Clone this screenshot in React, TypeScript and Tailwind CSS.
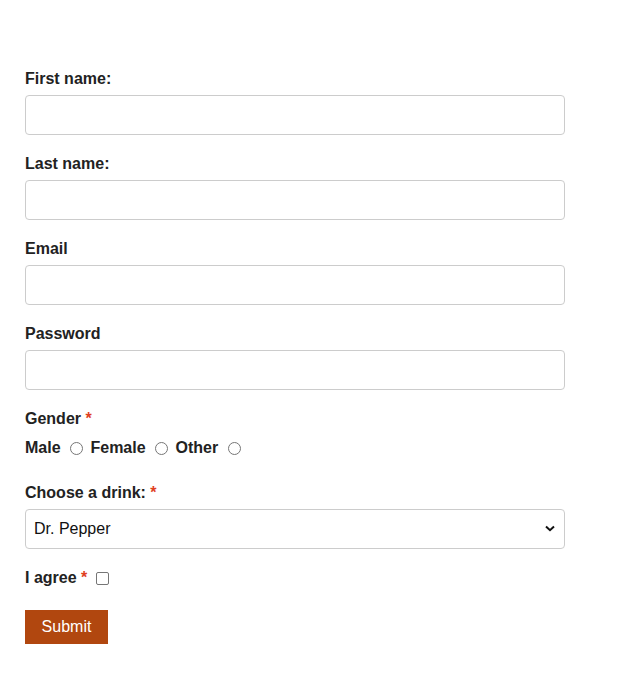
import React from "react";

const Label = ({ children, req }: { children: React.ReactNode; req?: boolean }) => (
  <label className="block text-[16px] leading-[24px] font-bold text-[#222222] pt-[1px] mb-[4px]">
    {children}
    {req && <span className="text-[#e0401f]"> *</span>}
  </label>
);

const Input = ({ type = "text" }: { type?: string }) => (
  <input
    type={type}
    className="block w-[540px] h-[40px] border border-[#cccccc] rounded-[4px] bg-white mb-[16px] px-2 outline-none"
  />
);

const Radio = () => (
  <input
    type="radio"
    name="gender"
    className="appearance-none inline-block w-[13px] h-[13px] rounded-full border border-[#767676] bg-white ml-[5px] mr-[3px] align-[-2px]"
  />
);

export default function App() {
  return (
    <div
      className="min-h-[679px] bg-white pl-[25px] pt-[66px]"
      style={{ fontFamily: '"Liberation Sans", Arial, sans-serif' }}
    >
      <form>
        <Label>First name:</Label>
        <Input />
        <Label>Last name:</Label>
        <Input />
        <Label>Email</Label>
        <Input type="email" />
        <Label>Password</Label>
        <Input type="password" />
        <Label req>Gender</Label>
        <div className="text-[16px] leading-[24px] font-bold text-[#222222] pt-[1px] mb-[20px]">
          Male <Radio /> Female <Radio /> Other <Radio />
        </div>
        <Label req>Choose a drink:</Label>
        <div className="relative w-[540px] h-[40px] mb-[16px]">
          <select className="appearance-none block w-full h-full border border-[#cccccc] rounded-[4px] bg-white pl-[8px] text-[16px] text-[#111111] outline-none">
            <option>Dr. Pepper</option>
            <option>Coke</option>
            <option>Pepsi</option>
          </select>
          <svg
            className="absolute right-[10px] top-[16px] pointer-events-none"
            width="10"
            height="7"
            viewBox="0 0 10 7"
          >
            <path d="M1 1.5 L5 5.2 L9 1.5" fill="none" stroke="#111" strokeWidth="2" />
          </svg>
        </div>
        <div className="text-[16px] leading-[24px] font-bold text-[#222222] pt-[1px] mb-[20px]">
          I agree<span className="text-[#e0401f]"> *</span>
          <input
            type="checkbox"
            className="appearance-none inline-block w-[13px] h-[13px] rounded-[2px] border border-[#767676] bg-white ml-[9px] align-[-2px]"
          />
        </div>
        <button
          type="button"
          className="block w-[83px] h-[34px] bg-[#b1470f] text-white text-[16px] leading-[34px]"
        >
          Submit
        </button>
      </form>
    </div>
  );
}
